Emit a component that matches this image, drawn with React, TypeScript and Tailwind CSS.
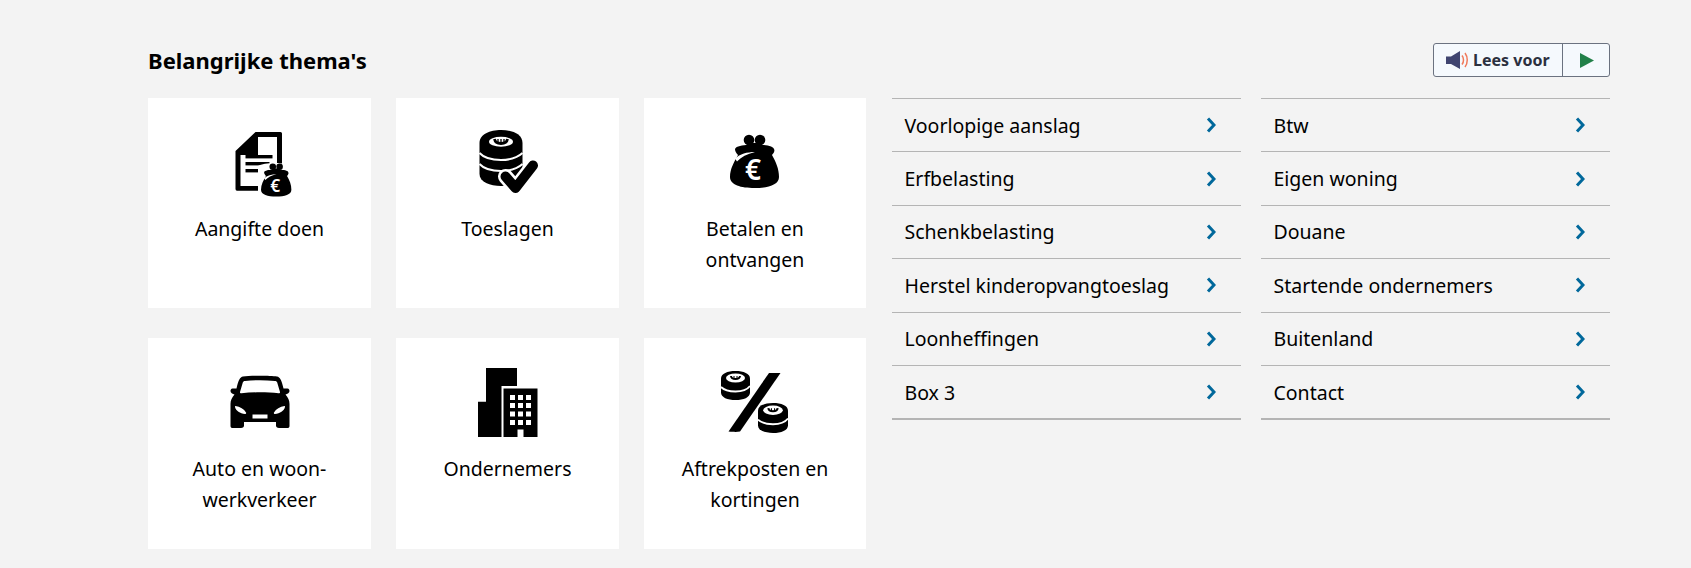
import React from "react";

const BagShape = ({ x, y, s }: { x: number; y: number; s: number }) => (
  <g transform={`translate(${x} ${y}) scale(${s})`}>
    <circle cx="19" cy="6" r="5.300" fill="#000" />
    <circle cx="30" cy="6" r="5.300" fill="#000" />
    <path d="M19 9H30L31 11C36 11 43 12 44 15C45 17 44 19 42 21C46 28 49 35 49 43C49 51 38 54 24.500 54C11 54 0 51 0 43C0 35 4 28 8 21C6 19 5 17 5 15C6 12 13 11 18 11Z" fill="#000" />
    <path d="M5 24.500C10 20 17 18 25 18C17 20 11 23 7 27.500Z" fill="#fff" />
    <text x="23" y="46" textAnchor="middle" fontSize="28" fontWeight="600" fill="#fff" fontFamily="'Noto Sans', sans-serif">€</text>
  </g>
);

const Coin = ({ cx, cy, w }: { cx: number; cy: number; w: number }) => {
  const k = w / 29;
  return (
    <g transform={`translate(${cx} ${cy}) scale(${k})`}>
      <path d="M-14.500 -7C-14.500 -12 -8 -14.500 0 -14.500C8 -14.500 14.500 -12 14.500 -7V7C14.500 12 8 14.500 0 14.500C-8 14.500 -14.500 12 -14.500 7Z" fill="#000" />
      <ellipse cx="0" cy="-7.500" rx="9.500" ry="4.500" fill="#fff" />
      <path d="M-4.500 -9.500C-4 -5.500 4 -5.500 4.500 -9.500" fill="none" stroke="#000" strokeWidth="2" />
      <path d="M-1.500 -9.500v2.500M1.500 -9.500v2.500" stroke="#000" strokeWidth="1" />
      <path d="M-14.500 1.500C-11 5 -4 6 0 6C5 6 11 5 14.500 0.500" fill="none" stroke="#fff" strokeWidth="1.800" />
    </g>
  );
};

const DocIcon = () => (
  <svg width="80" height="70" viewBox="0 0 80 70">
    <path fillRule="evenodd" d="M35.500 4H60.500Q62 4 62 5.500V42H57V9H38V27H20.500V58H48V62.700H17Q15.500 62.700 15.500 61V23Z" fill="#000" />
    <path d="M34 8.500V23H20.500Z" fill="#000" />
    <rect x="25.500" y="27" width="27" height="3.400" fill="#000" />
    <rect x="25.500" y="34" width="24" height="3.400" fill="#000" />
    <rect x="25.500" y="41" width="14" height="3.400" fill="#000" />
    <path d="M38 38C44 34 66 34 72 38V70H38Z" fill="#fff" />
    <BagShape x={41} y={35} s={0.62} />
  </svg>
);

const CoinsCheckIcon = () => (
  <svg width="80" height="70" viewBox="0 0 80 70">
    <path d="M11.500 15C11.500 6 22 2 33 2C44 2 54.500 6 54.500 15V46C54.500 54 44 58 33 58C22 58 11.500 54 11.500 46Z" fill="#000" />
    <ellipse cx="33" cy="13.700" rx="12" ry="5" fill="#fff" />
    <path d="M26.500 11C27.500 17 38.500 17 39.500 11" fill="none" stroke="#000" strokeWidth="2.800" />
    <path d="M30 11v3.500M33 11v4M36 11v3.500" stroke="#000" strokeWidth="1.300" />
    <path d="M11.500 25C17 31 26 32 33 32C41 32 49 30 54.500 25" fill="none" stroke="#fff" strokeWidth="2" />
    <path d="M11.500 36C17 42 26 43 33 43C41 43 49 41 54.500 36" fill="none" stroke="#fff" strokeWidth="2" />
    <path d="M37.500 48.500L47.500 60L65 37.500" fill="none" stroke="#fff" strokeWidth="15" strokeLinejoin="round" strokeLinecap="round" />
    <path d="M37.500 48.500L47.500 60L65 37.500" fill="none" stroke="#000" strokeWidth="10" strokeLinejoin="round" strokeLinecap="round" />
  </svg>
);

const PurseIcon = () => (
  <svg width="80" height="70" viewBox="0 0 80 70">
    <BagShape x={15} y={6} s={1} />
  </svg>
);

const CarIcon = () => (
  <svg width="80" height="70" viewBox="0 0 80 70">
    <path fillRule="evenodd" d="M23 8.500C30 7.500 50 7.500 57 8.500C60 9 61.500 12 63.500 20.500H67.500C69 20.500 69.500 22 69.500 23C69.500 25 67.500 26 65.500 26.500C68 29.500 69.500 32 69.500 36V58C69.500 59.500 68.500 60 67.500 60H59C57 60 56 59 56 57.500V54H24V57.500C24 59 23 60 21 60H12.500C11.500 60 10.500 59.500 10.500 58V36C10.500 32 12 29.500 14.500 26.500C12.500 26 10.500 25 10.500 23C10.500 22 11 20.500 12.500 20.500H16.500C18.500 12 20 9 23 8.500ZM25 13C24 13 23.200 13.500 22.800 14.500L20 24C19.800 25 20.500 25.500 21.500 25.300C33 24 47 24 58.500 25.300C59.500 25.500 60.200 25 60 24L57.200 14.500C56.800 13.500 56 13 55 13C45 12 35 12 25 13ZM15.500 38C15 38 14.800 38.500 15 39C16 43 20 45.500 25 46C26 46 26.500 45 26 44.500C24 41 20 38.500 15.500 38ZM64.500 38C60 38.500 56 41 54 44.500C53.500 45 54 46 55 46C60 45.500 64 43 65 39C65.200 38.500 65 38 64.500 38ZM32.500 46.500V50.500H47.500V46.500Z" fill="#000" />
  </svg>
);

const BuildingIcon = () => (
  <svg width="80" height="70" viewBox="0 0 80 70">
    <path d="M18 0H49V18H33.500V69H10V33.700H18Z" fill="#000" />
    <path d="M35.500 20.500H69.500V69H55.500V61.500H49.500V69H35.500Z" fill="#000" />
    {[27, 35, 43.500, 52].map((y) =>
      [42, 50, 58].map((x) => <rect key={`${x}-${y}`} x={x} y={y} width="5" height="5" fill="#fff" />)
    )}
  </svg>
);

const PercentIcon = () => (
  <svg width="80" height="70" viewBox="0 0 80 70">
    <Coin cx={20.500} cy={17.500} w={29} />
    <Coin cx={58} cy={50} w={30} />
    <path d="M54 5H65.500L25 63.500C22 64 19.500 64 13.500 63.500Z" fill="#000" />
  </svg>
);

const cards: { label: string; Icon: () => React.JSX.Element }[] = [
  { label: "Aangifte doen", Icon: DocIcon },
  { label: "Toeslagen", Icon: CoinsCheckIcon },
  { label: "Betalen en ontvangen", Icon: PurseIcon },
  { label: "Auto en woon-werkverkeer", Icon: CarIcon },
  { label: "Ondernemers", Icon: BuildingIcon },
  { label: "Aftrekposten en kortingen", Icon: PercentIcon },
];

const col1 = ["Voorlopige aanslag", "Erfbelasting", "Schenkbelasting", "Herstel kinderopvangtoeslag", "Loonheffingen", "Box 3"];
const col2 = ["Btw", "Eigen woning", "Douane", "Startende ondernemers", "Buitenland", "Contact"];

const Chevron = () => (
  <svg width="10" height="16" viewBox="0 0 10 16" className="shrink-0">
    <path d="M2 1.500L8 8L2 14.500" fill="none" stroke="#01689b" strokeWidth="3" />
  </svg>
);

const LinkList = ({ items }: { items: string[] }) => (
  <ul className="w-[349px] border-b-2 border-[#b4b4b4]">
    {items.map((t) => (
      <li key={t} className="h-[53.4px] border-t border-[#b4b4b4] flex items-center justify-between pl-[12.500px] pr-[25px] text-[19.500px] text-black">
        <span>{t}</span>
        <Chevron />
      </li>
    ))}
  </ul>
);

export default function App() {
  return (
    <div className="h-[568px] bg-[#f3f3f3] pl-[148px] pt-[43px] overflow-hidden" style={{ fontFamily: "'Noto Sans', 'Open Sans', sans-serif" }}>
      <div className="w-[1462px]">
        <div className="flex items-center justify-between h-[34px] mb-[21px]">
          <h2 className="text-[22px] font-bold text-black leading-none">Belangrijke thema's</h2>
          <div className="flex h-[34px] w-[177px] rounded-[3px] border border-[#6b7280] bg-[#f5f9fd]">
            <div className="w-[129px] flex items-center pl-[12px] gap-[4px] border-r border-[#6b7280]">
              <svg width="23" height="18" viewBox="0 0 23 18" className="shrink-0">
                <path d="M0 5.500H5L14 0V18L5 13H0Z" fill="#3f4470" />
                <path d="M16 4.500C18 7 18 11 16 13.500" fill="none" stroke="#f0795b" strokeWidth="1.500" />
                <path d="M19 2C22 6 22 12 19 16" fill="none" stroke="#f0795b" strokeWidth="1.500" />
              </svg>
              <span className="text-[16px] font-bold text-[#2b3040] whitespace-nowrap">Lees voor</span>
            </div>
            <div className="flex-1 flex items-center justify-center pl-[1px]">
              <svg width="14" height="15" viewBox="0 0 14 15">
                <path d="M0 0L14 7.500L0 15Z" fill="#218049" />
              </svg>
            </div>
          </div>
        </div>
        <div className="flex">
          <div className="w-[718px] grid grid-cols-[223px_223px_222px] gap-x-[25px] gap-y-[30px]">
            {cards.map(({ label, Icon }) => (
              <div key={label} className="h-[210.4px] bg-white pt-[30px] px-[28px] flex flex-col items-center">
                <div className="h-[70px] w-[80px] shrink-0">
                  <Icon />
                </div>
                <p className="mt-[14.600px] text-[19.500px] leading-[31px] text-black text-center">{label}</p>
              </div>
            ))}
          </div>
          <div className="ml-[26px] flex gap-[20px] items-start">
            <LinkList items={col1} />
            <LinkList items={col2} />
          </div>
        </div>
      </div>
    </div>
  );
}
